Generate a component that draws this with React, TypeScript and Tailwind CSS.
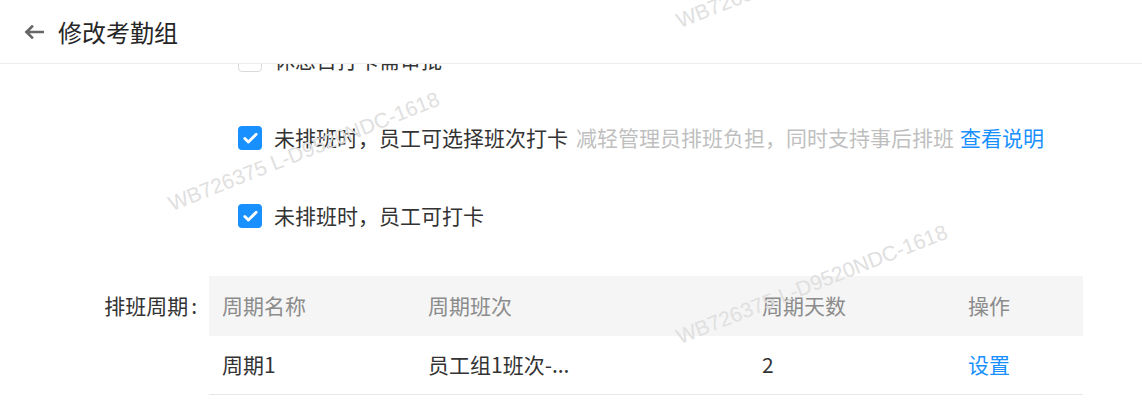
import { Check } from 'lucide-react';

// 排班设置页（滚动中的截面）
const FONT = { fontFamily: '"Noto Sans CJK SC", "Noto Sans", sans-serif' };

const WATERMARKS = [
  { left: 'left-[173px]', top: 'top-[193px]' },
  { left: 'left-[681px]', top: 'top-[326px]' },
  { left: 'left-[681px]', top: 'top-[10px]' },
];

const COLUMNS = [
  { label: '周期名称', width: 'w-[206px]' },
  { label: '周期班次', width: 'w-[334px]' },
  { label: '周期天数', width: 'w-[206px]' },
  { label: '操作', width: 'w-[128px]' },
];

const CheckBox = ({ checked }: { checked: boolean }) =>
  checked ? (
    <span className="w-[24px] h-[24px] rounded-[4px] bg-[#1890ff] flex items-center justify-center shrink-0">
      <Check className="w-[17px] h-[17px] text-white" strokeWidth={4} />
    </span>
  ) : (
    <span className="w-[24px] h-[24px] rounded-[4px] border-[1.5px] border-[#d9d9d9] bg-white shrink-0" />
  );

const BackArrow = () => (
  <svg width="20" height="14" viewBox="0 0 20 14" fill="none" className="shrink-0">
    <path d="M2.5 7H19.5M8 1.5L2.5 7l5.5 5.5" stroke="#666" strokeWidth="2.6" strokeLinecap="square" />
  </svg>
);

export default function App() {
  return (
    <div className="relative w-full h-[405px] bg-white overflow-hidden flex flex-col" style={FONT}>
      {/* EN-TÊTE */}
      <header className="h-[64px] shrink-0 flex items-center pl-[24px] gap-[14px] border-b border-[#ececec] bg-white">
        <BackArrow />
        <h1 className="text-[24px] text-[#262626] leading-none">修改考勤组</h1>
      </header>

      {/* CONTENU */}
      <div className="flex-1 overflow-hidden">
        <div className="-mt-[43px] flex flex-col text-[21px] text-[#333]">
          <div className="h-[78px] flex items-center gap-[12px] pl-[238px]">
            <CheckBox checked={false} />
            <span>休息日打卡需审批</span>
          </div>
          <div className="h-[78px] flex items-center gap-[12px] pl-[238px]">
            <CheckBox checked />
            <span className="whitespace-nowrap">
              未排班时，员工可选择班次打卡
              <span className="ml-[8px] text-[#bfbfbf]">减轻管理员排班负担，同时支持事后排班</span>
              <span className="ml-[6px] text-[#1890ff]">查看说明</span>
            </span>
          </div>
          <div className="h-[78px] flex items-center gap-[12px] pl-[238px]">
            <CheckBox checked />
            <span>未排班时，员工可打卡</span>
          </div>

          <div className="mt-[21px] flex">
            <div className="w-[209px] h-[60px] flex items-center justify-end">
              <span>排班周期</span>
              <span className="ml-[3px] mr-[12px]">:</span>
            </div>
            <div className="w-[874px]">
              <div className="h-[60px] flex items-center bg-[#f5f5f5] text-[#8c8c8c]">
                {COLUMNS.map((c) => (
                  <div key={c.label} className={`${c.width} pl-[13px]`}>{c.label}</div>
                ))}
              </div>
              <div className="h-[59px] flex items-center border-b border-[#e8e8e8]">
                <div className="w-[206px] pl-[13px]">周期1</div>
                <div className="w-[334px] pl-[13px]">员工组1班次-...</div>
                <div className="w-[206px] pl-[13px]">2</div>
                <div className="w-[128px] pl-[13px] text-[#1890ff]">设置</div>
              </div>
            </div>
          </div>
        </div>
      </div>

      {/* FILIGRANE */}
      {WATERMARKS.map((w, i) => (
        <div
          key={i}
          className={`absolute ${w.left} ${w.top} origin-bottom-left -rotate-[21.6deg] pointer-events-none whitespace-nowrap text-[21px] leading-none text-[#e0e0e0]`}
          style={{ fontFamily: '"Liberation Sans", sans-serif' }}
        >
          WB726375 L-D9520NDC-1618
        </div>
      ))}
    </div>
  );
}
